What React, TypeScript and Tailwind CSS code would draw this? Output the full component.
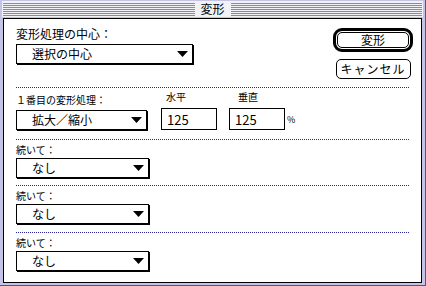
import React from 'react';

function Stripes() {
    return (
        <div className="flex-1 flex flex-col gap-px pt-[2px] h-full">
            <div className="h-px bg-[#8c8c8c]"></div>
            <div className="h-px bg-[#8c8c8c]"></div>
            <div className="h-px bg-[#8c8c8c]"></div>
            <div className="h-px bg-[#8c8c8c]"></div>
            <div className="h-px bg-[#8c8c8c]"></div>
            <div className="h-px bg-[#8c8c8c]"></div>
            <div className="h-px bg-[#8c8c8c]"></div>
        </div>
    );
}

function Triangle() {
    return (
        <svg width="11" height="6" viewBox="0 0 11 6" className="ml-auto mr-[4px] shrink-0">
            <polygon points="0,0 11,0 5.5,6" fill="#000"/>
        </svg>
    );
}

function Popup({label, width}: { label: string, width: string }) {
    return (
        <div className={`${width} h-[20px] border border-black bg-white shadow-[1px_1px_0_0_#000] flex items-center pl-[15px] text-[12px] leading-none`}>
            <span>{label}</span>
            <Triangle/>
        </div>
    );
}

// 1px on / 1px off, like the old dotted separators
function Dotted() {
    return <div className="mx-[12px] h-px shrink-0 bg-[linear-gradient(to_right,#2424a0_50%,transparent_50%)] bg-[length:2px_1px]"></div>;
}

function Then({height}: { height: string }) {
    return (
        <div className={`${height} pl-[12px] pt-[4px] flex flex-col items-start`}>
            <div className="text-[10px] leading-[12px]">続いて：</div>
            <div className="mt-[2px]">
                <Popup label="なし" width="w-[133px]"/>
            </div>
        </div>
    );
}

export default function App() {
    return (
        <div className="w-[426px] h-[286px] bg-[#c4c4e6] border-r border-b border-[#55557a] flex flex-col font-['Noto_Sans_CJK_JP',sans-serif] text-black">
            <div className="h-[18px] shrink-0 pt-px px-[2px]">
                <div className="h-[16px] px-px flex items-start bg-[#f2f2f6]">
                    <Stripes/>
                    <div className="px-[6px] text-[12px] leading-[16px]">変形</div>
                    <Stripes/>
                </div>
            </div>
            <div className="mx-[3px] h-[265px] border border-black bg-white flex flex-col">
                <div className="h-[68px] flex justify-between">
                    <div className="pl-[12px] pt-[8px] flex flex-col items-start">
                        <div className="text-[12px] leading-[14px]">変形処理の中心：</div>
                        <div className="mt-[3px]">
                            <Popup label="選択の中心" width="w-[177px]"/>
                        </div>
                    </div>
                    <div className="pt-[9px] pr-[8px] flex flex-col items-center">
                        <div className="w-[80px] h-[24px] border-[3px] border-black rounded-[9px] p-px">
                            <div className="h-full border border-black rounded-[5px] flex items-center justify-center text-[12px] leading-none">変形</div>
                        </div>
                        <div className="mt-[7px] w-[75px] h-[20px] border border-black rounded-[5px] flex items-center justify-center text-[12px] leading-none tracking-[1px]">キャンセル</div>
                    </div>
                </div>
                <Dotted/>
                <div className="h-[51px] pl-[12px] flex items-start">
                    <div className="pt-[6px] flex flex-col items-start">
                        <div className="text-[10px] leading-[12px]">１番目の変形処理：</div>
                        <div className="mt-[4px]">
                            <Popup label="拡大／縮小" width="w-[131px]"/>
                        </div>
                    </div>
                    <div className="ml-[14px] pt-[3px] flex flex-col items-start">
                        <div className="ml-[5px] text-[10px] leading-[12px]">水平</div>
                        <div className="mt-[5px] w-[56px] h-[22px] border border-black flex items-center pl-[5px] text-[13px] leading-none">125</div>
                    </div>
                    <div className="ml-[12px] pt-[3px] flex flex-col items-start">
                        <div className="ml-[9px] text-[10px] leading-[12px]">垂直</div>
                        <div className="mt-[5px] w-[56px] h-[22px] border border-black flex items-center pl-[5px] text-[13px] leading-none">125</div>
                    </div>
                    <div className="ml-[2px] pt-[27px] text-[9px] leading-none">%</div>
                </div>
                <Dotted/>
                <Then height="h-[45px]"/>
                <Dotted/>
                <Then height="h-[46px]"/>
                <Dotted/>
                <Then height="flex-1"/>
            </div>
        </div>
    );
}
